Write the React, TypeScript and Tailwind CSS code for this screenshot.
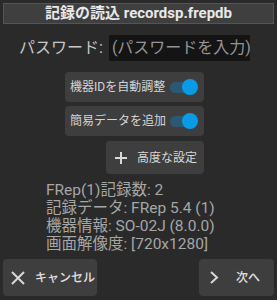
import React from 'react';

const font = { fontFamily: 'Roboto, "Noto Sans CJK JP", sans-serif' };

function Toggle() {
  return (
    <div className="relative w-[28px] h-[16px] flex items-center">
      <div className="w-[26px] h-[11px] rounded-full bg-[#2c5873]" />
      <div className="absolute right-0 top-0 w-[16px] h-[16px] rounded-full bg-[#0a9be6]" />
    </div>
  );
}

function ToggleRow({ label }: { label: string }) {
  return (
    <div className="ml-[65px] w-[139px] h-[30px] rounded-[4px] bg-[#3e3e3e] flex items-center justify-between pl-[5px] pr-[6px]">
      <span className="text-[12px] text-[#d4d4d4]">{label}</span>
      <Toggle />
    </div>
  );
}

export default function App() {
  return (
    <div className="w-[277px] h-[300px] bg-[#2a2a2a] flex flex-col overflow-hidden" style={font}>
      <div className="mx-[3px] mt-[3px] h-[21px] bg-[#3f3f3f] border border-[#555] flex items-center justify-center">
        <span className="text-[15px] font-bold text-[#e8e8e8] leading-none">記録の読込 recordsp.frepdb</span>
      </div>

      <div className="mt-[11px] pl-[19px] flex items-center">
        <span className="text-[16px] text-[#c8c8c8]">パスワード:</span>
        <div className="ml-[6px] w-[141px] h-[26px] bg-[#141414] flex items-center pl-[3px]">
          <span className="text-[16px] text-[#949494] whitespace-nowrap">(パスワードを入力)</span>
        </div>
      </div>

      <div className="mt-[11px]">
        <ToggleRow label="機器IDを自動調整" />
      </div>
      <div className="mt-[4px]">
        <ToggleRow label="簡易データを追加" />
      </div>

      <div className="mt-[5px] ml-[106px] w-[98px] h-[33px] rounded-[4px] bg-[#3e3e3e] flex items-center pl-[9px]">
        <svg width="12" height="12" viewBox="0 0 12 12" className="text-[#d8d8d8]">
          <path d="M6 0V12M0 6H12" stroke="currentColor" strokeWidth="2" />
        </svg>
        <span className="ml-[10px] text-[12px] text-[#d8d8d8]">高度な設定</span>
      </div>

      <div className="mt-[7px] pl-[46px] text-[15.5px] leading-[18px] text-[#a6a6a6]">
        <div>FRep(1)記録数: 2</div>
        <div>記録データ: FRep 5.4 (1)</div>
        <div>機器情報: SO-02J (8.0.0)</div>
        <div>画面解像度: [720x1280]</div>
      </div>

      <div className="mt-auto mb-[4px] px-[3px] flex justify-between">
        <div className="w-[94px] h-[37px] rounded-[4px] bg-[#3e3e3e] flex items-center pl-[7px]">
          <svg width="16" height="16" viewBox="0 0 16 16" className="text-[#d8d8d8]">
            <path d="M2 2L14 14M14 2L2 14" stroke="currentColor" strokeWidth="2" />
          </svg>
          <span className="ml-[9px] text-[12px] font-medium text-[#e0e0e0]">キャンセル</span>
        </div>
        <div className="w-[75px] h-[37px] rounded-[4px] bg-[#3e3e3e] flex items-center pl-[10px]">
          <svg width="10" height="13" viewBox="0 0 10 13" className="text-[#d8d8d8]">
            <path d="M2 1L8 6.5L2 12" stroke="currentColor" strokeWidth="2" fill="none" />
          </svg>
          <span className="ml-[17px] text-[12px] font-medium text-[#e0e0e0]">次へ</span>
        </div>
      </div>
    </div>
  );
}
